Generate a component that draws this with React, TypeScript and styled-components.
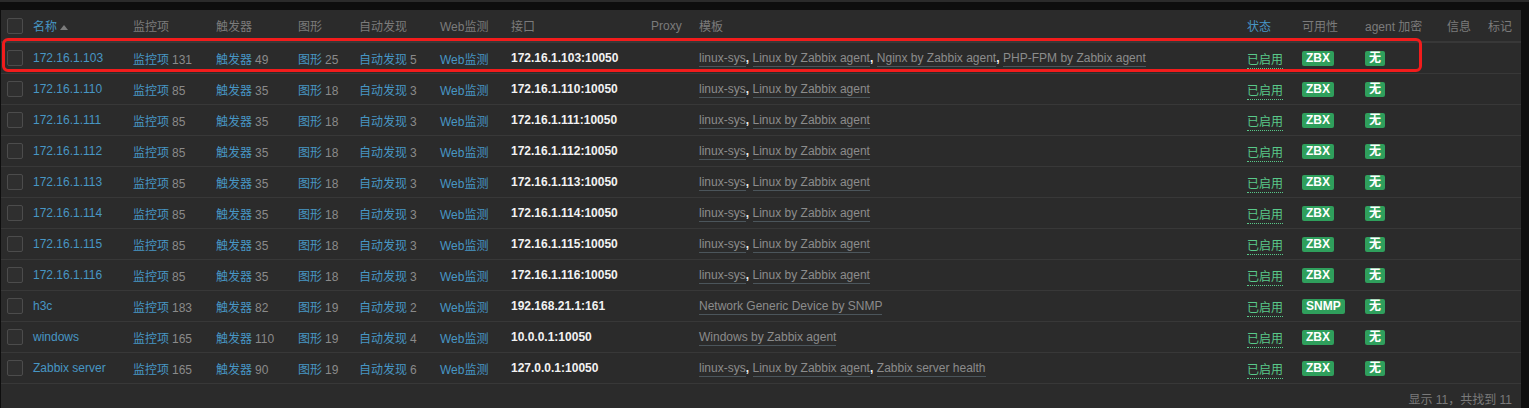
import React from 'react';
import styled, { createGlobalStyle } from 'styled-components';

const GlobalStyle = createGlobalStyle`
  html, body {
    margin: 0;
    padding: 0;
    background: #0e0e0e;
  }
  body {
    font-family: Arial, "Liberation Sans", "Noto Sans CJK SC", sans-serif;
    font-size: 12px;
  }
`;

const TopStrip = styled.div`
  height: 2px;
  background: #2b2b2b;
  margin-bottom: 8px;
`;

const Panel = styled.div`
  position: relative;
  margin-left: 1px;
  width: 1520px;
  background: #2b2b2b;
  min-height: 398px;
`;

const Table = styled.table`
  width: 1520px;
  table-layout: fixed;
  border-collapse: collapse;
`;

const HeadCell = styled.th<{ $sort?: boolean }>`
  height: 31px;
  padding: 0 5px;
  text-align: left;
  font-weight: normal;
  white-space: nowrap;
  color: ${(p) => (p.$sort ? '#4796c4' : '#7b7b7b')};
  border-bottom: 2px solid #383838;
  vertical-align: middle;
`;

const Cell = styled.td`
  height: 30px;
  padding: 0 5px;
  white-space: nowrap;
  vertical-align: middle;
  color: #8f8f8f;
`;

const CheckCell = styled.td`
  padding: 0 0 0 6px;
  vertical-align: middle;
`;

const CheckHead = styled.th`
  padding: 0 0 0 6px;
  border-bottom: 2px solid #383838;
  vertical-align: middle;
`;

const Row = styled.tr`
  border-bottom: 1px solid #383838;
`;

const Checkbox = styled.span`
  display: block;
  width: 14px;
  height: 14px;
  border: 1px solid #4c4c4c;
  border-radius: 2px;
  background: #2f2f2f;
`;

const SortArrow = styled.span`
  display: inline-block;
  margin-left: 3px;
  width: 0;
  height: 0;
  border-left: 4px solid transparent;
  border-right: 4px solid transparent;
  border-bottom: 5px solid #7b7b7b;
  vertical-align: 1px;
`;

const Link = styled.a`
  color: #4796c4;
  text-decoration: none;
`;

const Count = styled.span`
  color: #8a8a8a;
  margin-left: 3px;
`;

const Iface = styled.span`
  color: #f2f2f2;
  font-weight: bold;
`;

const Template = styled.a`
  color: #8c8c8c;
  text-decoration: none;
  border-bottom: 1px solid #4b555b;
  padding-bottom: 1px;
`;

const Sep = styled.span`
  color: #f2f2f2;
  font-weight: bold;
  margin-right: 3.5px;
`;

const Status = styled.a`
  color: #59c98a;
  text-decoration: none;
  border-bottom: 1px dotted #59c98a;
  padding-bottom: 1px;
`;

const Badge = styled.span`
  display: inline-block;
  padding: 0 4px;
  height: 15px;
  line-height: 15px;
  border-radius: 2px;
  background: #2f9f5c;
  color: #ffffff;
  font-weight: bold;
  font-size: 12px;
`;

const Highlight = styled.div`
  position: absolute;
  left: 1px;
  top: 28px;
  width: 1414px;
  height: 28px;
  border: 3px solid #f21c1c;
  border-radius: 6px;
  pointer-events: none;
`;

const Footer = styled.div`
  text-align: right;
  padding: 6px 9px 0 0;
  color: #7a7a7a;
`;

type Host = {
  name: string;
  items: number;
  triggers: number;
  graphs: number;
  discovery: number;
  iface: string;
  templates: string[];
  avail: string;
};

const linux = ['linux-sys', 'Linux by Zabbix agent'];

const hosts: Host[] = [
  { name: '172.16.1.103', items: 131, triggers: 49, graphs: 25, discovery: 5, iface: '172.16.1.103:10050', templates: [...linux, 'Nginx by Zabbix agent', 'PHP-FPM by Zabbix agent'], avail: 'ZBX' },
  ...['110', '111', '112', '113', '114', '115', '116'].map((n) => ({
    name: `172.16.1.${n}`, items: 85, triggers: 35, graphs: 18, discovery: 3, iface: `172.16.1.${n}:10050`, templates: linux, avail: 'ZBX',
  })),
  { name: 'h3c', items: 183, triggers: 82, graphs: 19, discovery: 2, iface: '192.168.21.1:161', templates: ['Network Generic Device by SNMP'], avail: 'SNMP' },
  { name: 'windows', items: 165, triggers: 110, graphs: 19, discovery: 4, iface: '10.0.0.1:10050', templates: ['Windows by Zabbix agent'], avail: 'ZBX' },
  { name: 'Zabbix server', items: 165, triggers: 90, graphs: 19, discovery: 6, iface: '127.0.0.1:10050', templates: [...linux, 'Zabbix server health'], avail: 'ZBX' },
];

const widths = [27, 100, 83, 82, 61, 81, 71, 140, 48, 548, 55, 63, 82, 41, 38];

const App: React.FC = () => {
  return (
    <>
      <GlobalStyle />
      <TopStrip />
      <Panel>
        <Table>
          <colgroup>
            {widths.map((w, i) => (
              <col key={i} style={{ width: w }} />
            ))}
          </colgroup>
          <thead>
            <tr>
              <CheckHead>
                <Checkbox />
              </CheckHead>
              <HeadCell $sort>
                名称<SortArrow />
              </HeadCell>
              <HeadCell>监控项</HeadCell>
              <HeadCell>触发器</HeadCell>
              <HeadCell>图形</HeadCell>
              <HeadCell>自动发现</HeadCell>
              <HeadCell>Web监测</HeadCell>
              <HeadCell>接口</HeadCell>
              <HeadCell>Proxy</HeadCell>
              <HeadCell>模板</HeadCell>
              <HeadCell $sort>状态</HeadCell>
              <HeadCell>可用性</HeadCell>
              <HeadCell>agent 加密</HeadCell>
              <HeadCell>信息</HeadCell>
              <HeadCell>标记</HeadCell>
            </tr>
          </thead>
          <tbody>
            {hosts.map((h) => (
              <Row key={h.name}>
                <CheckCell>
                  <Checkbox />
                </CheckCell>
                <Cell>
                  <Link>{h.name}</Link>
                </Cell>
                <Cell>
                  <Link>监控项</Link>
                  <Count>{h.items}</Count>
                </Cell>
                <Cell>
                  <Link>触发器</Link>
                  <Count>{h.triggers}</Count>
                </Cell>
                <Cell>
                  <Link>图形</Link>
                  <Count>{h.graphs}</Count>
                </Cell>
                <Cell>
                  <Link>自动发现</Link>
                  <Count>{h.discovery}</Count>
                </Cell>
                <Cell>
                  <Link>Web监测</Link>
                </Cell>
                <Cell>
                  <Iface>{h.iface}</Iface>
                </Cell>
                <Cell />
                <Cell>
                  {h.templates.map((t, i) => (
                    <React.Fragment key={t}>
                      {i > 0 && <Sep>,</Sep>}
                      <Template>{t}</Template>
                    </React.Fragment>
                  ))}
                </Cell>
                <Cell>
                  <Status>已启用</Status>
                </Cell>
                <Cell>
                  <Badge>{h.avail}</Badge>
                </Cell>
                <Cell>
                  <Badge>无</Badge>
                </Cell>
                <Cell />
                <Cell />
              </Row>
            ))}
          </tbody>
        </Table>
        <Footer>显示 11，共找到 11</Footer>
        <Highlight />
      </Panel>
    </>
  );
};

export default App;
